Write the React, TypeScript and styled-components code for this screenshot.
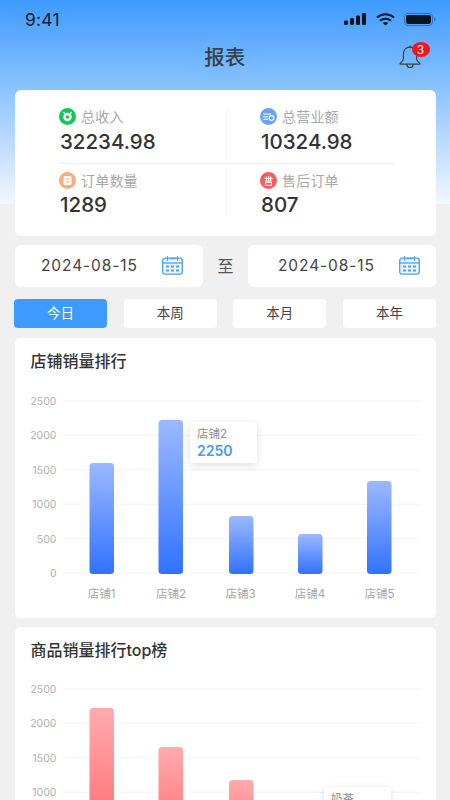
import React from "react";
import styled, { createGlobalStyle } from "styled-components";

const Global = createGlobalStyle`
  html, body { margin: 0; padding: 0; height: 800px; overflow: hidden; background: #f0f0f0; }
  * { box-sizing: border-box; }
  body { font-family: Inter, "Noto Sans CJK SC", sans-serif; }
`;

const CJK = `Inter, "Noto Sans CJK SC", sans-serif`;

const Page = styled.div`
  width: 450px;
  height: 800px;
  overflow: hidden;
  padding: 0 14px 0 14.5px;
  background: linear-gradient(180deg, #3d9bff 0%, #f2f7fd 100%) top / 100% 204px no-repeat, #f0f0f0;
`;
const StatusBar = styled.div`
  height: 38px;
  margin: 0 -14px 0 -14.5px;
  padding: 0 14px 0 25px;
  display: flex;
  align-items: center;
  justify-content: space-between;
`;
const Time = styled.span`
  font-size: 17.5px;
  color: #16202c;
  letter-spacing: 0.2px;
`;
const StatusIcons = styled.div`
  display: flex;
  align-items: center;
  gap: 9.5px;
`;
const NavBar = styled.div`
  height: 40px;
  margin-bottom: 12px;
  padding-right: 1px;
  display: flex;
  align-items: center;
  justify-content: center;
  position: relative;
`;
const Title = styled.h1`
  margin: 1px 0 0;
  font: 500 20.5px/1 ${CJK};
  color: #3a3f45;
`;
const Bell = styled.div`
  position: absolute;
  left: 383px;
  top: 6px;
  width: 24px;
  height: 26px;
`;
const Badge = styled.span`
  position: absolute;
  left: 14px;
  top: -2.5px;
  width: 18px;
  height: 15.5px;
  border-radius: 50%;
  background: #f5141c;
  color: #fff;
  font: 400 12px/15.5px Inter, sans-serif;
  text-align: center;
`;
const SummaryCard = styled.section`
  height: 146px;
  margin-left: 0.5px;
  border-radius: 6px;
  background: #fff;
  padding: 18px 43px 19px 43.5px;
`;
const SummaryGrid = styled.div`
  height: 109px;
  display: grid;
  grid-template-columns: 167.5px 167.5px;
  grid-template-rows: 54.5px 54.5px;
`;
const Cell = styled.div<{ $right?: boolean; $bottom?: boolean }>`
  padding: ${(p) => (p.$bottom ? "8.5px" : "0")} 0 0 ${(p) => (p.$right ? "33px" : "0.5px")};
  ${(p) => (p.$right ? "border-left: 1px solid #f7f7f7;" : "")}
  ${(p) => (p.$bottom ? "border-top: 1px solid #f0f0f0;" : "")}
  display: flex;
  flex-direction: column;
`;
const LabelRow = styled.div`
  height: 17px;
  display: flex;
  align-items: center;
  gap: 5px;
  font: 400 14px/17px ${CJK};
  letter-spacing: 0.2px;
  color: #a8a8a8;
`;
const Value = styled.div<{ $bottom?: boolean }>`
  margin-top: ${(p) => (p.$bottom ? "2.5px" : "3.5px")};
  font: 500 20.5px/26px Inter, sans-serif;
  color: #333;
  padding-left: 1px;
`;
const DateRow = styled.div`
  margin-top: 8.5px;
  margin-left: 0.5px;
  height: 42px;
  display: flex;
  align-items: stretch;
  justify-content: space-between;
`;
const DateField = styled.div<{ $wide?: boolean }>`
  width: 188px;
  border-radius: 6px;
  background: #fff;
  padding: 0 ${(p) => (p.$wide ? "16px" : "20px")} 0 ${(p) => (p.$wide ? "30px" : "26px")};
  display: flex;
  align-items: center;
  justify-content: space-between;
  font: 400 15.5px/1 Inter, sans-serif;
  letter-spacing: 0.9px;
  color: #444;
`;
const To = styled.span`
  align-self: center;
  font: 400 16px/1 ${CJK};
  color: #555;
`;
const Tabs = styled.div`
  margin: 12.5px 0 0 -0.5px;
  height: 29px;
  display: flex;
  justify-content: space-between;
`;
const Tab = styled.div<{ $active?: boolean }>`
  width: 93px;
  border-radius: 4px;
  background: ${(p) => (p.$active ? "#3d9bff" : "#fff")};
  color: ${(p) => (p.$active ? "#fff" : "#444")};
  font: 400 13.5px/29px ${CJK};
  text-align: center;
`;
const ChartCard = styled.section`
  margin-top: 10px;
  height: 280px;
  border-radius: 6px;
  background: #fff;
  padding-top: 12px;
  position: relative;
  & + & { margin-top: 9px; }
`;
const CardTitle = styled.h2`
  margin: 0;
  padding-left: 16px;
  font: 500 16px/22px ${CJK};
  color: #333;
`;
const ChartSvg = styled.svg`
  display: block;
  width: 421.5px;
  height: 246px;
`;
const Tooltip = styled.div<{ $left: number; $top: number }>`
  position: absolute;
  left: ${(p) => p.$left}px;
  top: ${(p) => p.$top}px;
  width: 66.5px;
  height: 41px;
  padding: 5px 7px;
  border-radius: 3px;
  background: #fff;
  box-shadow: 0 2px 8px rgba(0, 0, 0, 0.13);
`;
const TipName = styled.div`
  font: 400 11.5px/14px ${CJK};
  color: #8c8c8c;
`;
const TipValue = styled.div`
  margin-top: 1px;
  font: 600 14px/17px Inter, sans-serif;
  color: #3d9bff;
`;

const Ticks = [2500, 2000, 1500, 1000, 500, 0];
const BarX = [74.5, 143.5, 214, 283, 352];
const LabelX = [86.5, 156, 225.5, 295, 364.5];

type Bar = { top: number; label: string };

function Chart({ id, bars, from, to, bottom, gridTop }: { id: string; bars: Bar[]; from: string; to: string; bottom: number; gridTop: number }) {
  const step = 34.4;
  return (
    <ChartSvg viewBox="0 0 421.5 246">
      <defs>
        <linearGradient id={id} x1="0" y1="0" x2="0" y2="1">
          <stop offset="0" stopColor={from} />
          <stop offset="1" stopColor={to} />
        </linearGradient>
      </defs>
      {Ticks.map((t, i) => (
        <g key={t}>
          <line x1="49" x2="404" y1={gridTop + i * step} y2={gridTop + i * step} stroke="#f3f3f3" strokeWidth="1" />
          <text x="41.5" y={gridTop + 4 + i * step} textAnchor="end" fontFamily="Inter, sans-serif" fontSize="10.5" fill="#b0b0b0">{t}</text>
        </g>
      ))}
      {bars.map((b, i) => (
        <rect key={i} x={BarX[i]} y={b.top} width="24.5" height={bottom - b.top} rx="3.5" fill={`url(#${id})`} />
      ))}
      {bars.map((b, i) => (
        <text key={b.label} x={LabelX[i]} y="226" textAnchor="middle" fontFamily={CJK} fontSize="11.5" fill="#a6a6a6">{b.label}</text>
      ))}
    </ChartSvg>
  );
}

const Signal = () => (
  <svg width="22" height="12" viewBox="0 0 22 12" fill="#0b1522">
    <rect x="0" y="7.5" width="4" height="4.5" rx="1.2" />
    <rect x="6" y="5" width="4" height="7" rx="1.2" />
    <rect x="12" y="2.5" width="4" height="9.5" rx="1.2" />
    <rect x="18" y="0" width="4" height="12" rx="1.2" />
  </svg>
);
const Wifi = () => (
  <svg width="19" height="13" viewBox="0 0 19 13" fill="none" stroke="#0b1522" strokeWidth="2">
    <path d="M1 4.6C6 .2 13 .2 18 4.6" />
    <path d="M4 7.8c3.2-2.8 7.8-2.8 11 0" />
    <path d="M9.5 12.6l2.7-2.7c-1.5-1.3-3.9-1.3-5.4 0z" fill="#0b1522" stroke="none" />
  </svg>
);
const Battery = () => (
  <svg width="32" height="13" viewBox="0 0 32 13">
    <rect x="0.5" y="0.5" width="28" height="12" rx="3.5" fill="none" stroke="#2f6eb5" />
    <rect x="2" y="2" width="25" height="9" rx="2.3" fill="#0b1522" />
    <path d="M30 4.5c1 .3 1.6 1 1.6 2s-.6 1.7-1.6 2z" fill="#2f6eb5" />
  </svg>
);
const BellIcon = () => (
  <svg width="24" height="26" viewBox="0 0 24 26" fill="none" stroke="#3a3f45" strokeWidth="1.2" strokeLinejoin="round" strokeLinecap="round">
    <path d="M12 3.2c-4.2 0-6.6 3-6.6 7v4.6c0 1.4-1.1 3-3.1 4.4-.5.4-.3 1 .3 1h18.8c.6 0 .8-.6.3-1-2-1.4-3.1-3-3.1-4.4v-4.6c0-4-2.400-7-6.600-7z" />
    <path d="M8.800 20.400c.1 2 1.500 3.100 3.200 3.100s3.100-1.100 3.200-3.100" />
    <path d="M12 3.200V1.800" />
  </svg>
);
const CalendarIcon = () => (
  <svg width="21" height="19" viewBox="0 0 21 19" fill="none">
    <rect x="0.7" y="2.200" width="19.600" height="16" rx="2.500" fill="#eaf4ff" stroke="#4f9ff2" strokeWidth="1.300" />
    <path d="M1 7h19" stroke="#4f9ff2" strokeWidth="1.300" />
    <path d="M5.500 .7v3.500M15.500 .7v3.500M8 2.500h5" stroke="#4f9ff2" strokeWidth="1.300" strokeLinecap="round" />
    <g fill="#4f9ff2">
      <rect x="4" y="9.500" width="3" height="2" /><rect x="9" y="9.500" width="3" height="2" /><rect x="14" y="9.500" width="3" height="2" />
      <rect x="4" y="13.500" width="3" height="2" /><rect x="9" y="13.500" width="3" height="2" /><rect x="14" y="13.500" width="3" height="2" />
    </g>
  </svg>
);
const GreenIcon = () => (
  <svg width="17" height="17" viewBox="0 0 17 17">
    <circle cx="8.500" cy="8.500" r="8.500" fill="#14c55a" />
    <circle cx="8.500" cy="9" r="4.200" fill="#fff" />
    <path d="M4.500 4.500l2 1.500M12.500 4.500l-2 1.500" stroke="#fff" strokeWidth="1.300" strokeLinecap="round" />
    <circle cx="8.500" cy="9" r="1.800" fill="#14c55a" />
  </svg>
);
const BlueIcon = () => (
  <svg width="17" height="17" viewBox="0 0 17 17" fill="none">
    <circle cx="8.500" cy="8.500" r="8.500" fill="#6aa5f5" />
    <path d="M3.500 6h7.500M3 8.700h5M3.500 11.300h4.500" stroke="#fff" strokeWidth="1.100" />
    <circle cx="11.500" cy="10" r="2.300" stroke="#fff" strokeWidth="1.200" />
  </svg>
);
const OrangeIcon = () => (
  <svg width="17" height="17" viewBox="0 0 17 17" fill="none">
    <circle cx="8.500" cy="8.500" r="8.500" fill="#f9ae7c" />
    <rect x="4.500" y="4" width="8" height="9" rx="1.500" fill="#fff" />
    <path d="M6.500 7h4M6.500 10h4" stroke="#f9ae7c" strokeWidth="1.100" />
  </svg>
);
const RedIcon = () => (
  <svg width="17" height="17" viewBox="0 0 17 17" fill="none">
    <circle cx="8.500" cy="8.500" r="8.500" fill="#f95c60" />
    <path d="M4.500 6.500h8M8.500 4v5M6.300 4.500v4.500h4.400V4.500" stroke="#fff" strokeWidth="1.100" />
    <rect x="5.500" y="10.300" width="6" height="3" stroke="#fff" strokeWidth="1" />
  </svg>
);

const storeBars: Bar[] = [
  { top: 91, label: "店铺1" },
  { top: 48, label: "店铺2" },
  { top: 144, label: "店铺3" },
  { top: 162, label: "店铺4" },
  { top: 109, label: "店铺5" },
];
const goodsBars: Bar[] = [
  { top: 47, label: "奶茶1" },
  { top: 86, label: "奶茶2" },
  { top: 119, label: "奶茶3" },
  { top: 175, label: "奶茶4" },
  { top: 190, label: "奶茶5" },
];

export default function App() {
  return (
    <Page>
      <Global />
      <StatusBar>
        <Time>9:41</Time>
        <StatusIcons>
          <Signal />
          <Wifi />
          <Battery />
        </StatusIcons>
      </StatusBar>
      <NavBar>
        <Title>报表</Title>
        <Bell>
          <BellIcon />
          <Badge>3</Badge>
        </Bell>
      </NavBar>
      <SummaryCard>
        <SummaryGrid>
          <Cell>
            <LabelRow><GreenIcon />总收入</LabelRow>
            <Value>32234.98</Value>
          </Cell>
          <Cell $right>
            <LabelRow><BlueIcon />总营业额</LabelRow>
            <Value>10324.98</Value>
          </Cell>
          <Cell $bottom>
            <LabelRow><OrangeIcon />订单数量</LabelRow>
            <Value $bottom>1289</Value>
          </Cell>
          <Cell $right $bottom>
            <LabelRow><RedIcon />售后订单</LabelRow>
            <Value $bottom>807</Value>
          </Cell>
        </SummaryGrid>
      </SummaryCard>
      <DateRow>
        <DateField>2024-08-15<CalendarIcon /></DateField>
        <To>至</To>
        <DateField $wide>2024-08-15<CalendarIcon /></DateField>
      </DateRow>
      <Tabs>
        <Tab $active>今日</Tab>
        <Tab>本周</Tab>
        <Tab>本月</Tab>
        <Tab>本年</Tab>
      </Tabs>
      <ChartCard>
        <CardTitle>店铺销量排行</CardTitle>
        <Chart id="blue" bars={storeBars} from="#9cb9ff" to="#3172ff" bottom={202} gridTop={29} />
        <Tooltip $left={175.5} $top={84}><TipName>店铺2</TipName><TipValue>2250</TipValue></Tooltip>
      </ChartCard>
      <ChartCard>
        <CardTitle>商品销量排行top榜</CardTitle>
        <Chart id="red" bars={goodsBars} from="#ffabaf" to="#ff5f63" bottom={202} gridTop={28} />
        <Tooltip $left={309.5} $top={160}><TipName>奶茶</TipName><TipValue>900</TipValue></Tooltip>
      </ChartCard>
    </Page>
  );
}
